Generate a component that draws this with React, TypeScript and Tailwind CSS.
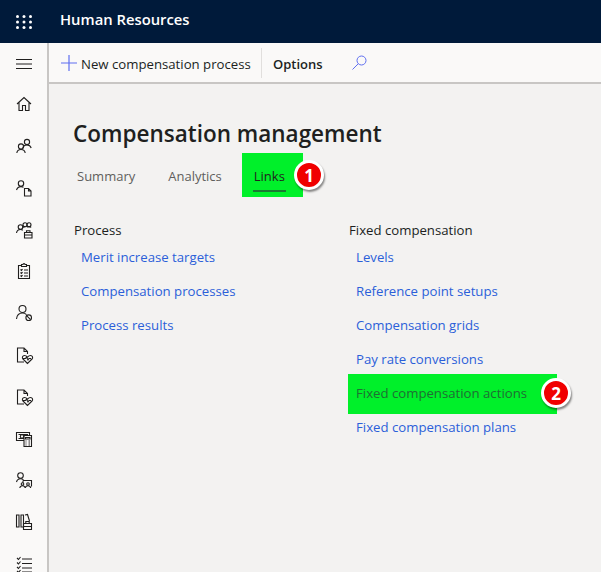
import type { ReactNode } from 'react'

const railIcons: ReactNode[] = [
  // home
  <path key="h" d="M1 8 8 1.5 15 8M3 6.5V14.5H6.5V9.5H9.5V14.5H13V6.5" />,
  // people
  <>
    <circle cx="11" cy="4" r="2.6" />
    <path d="M6.8 10c.4-2 2-3 4.2-3s3.600 1 4.200 3" />
    <circle cx="5" cy="8.500" r="2.600" />
    <path d="M.8 15c.3-2.300 2-3.500 4.200-3.500S8.900 12.700 9.200 15" />
  </>,
  // person + document
  <>
    <circle cx="5" cy="3.500" r="2.700" />
    <path d="M.5 10c.6-2 2.300-3.400 4.500-3.400 1 0 1.800.3 2.500.7" />
    <path d="M8.500 8.500h4l2.500 2.500v5h-6.500zM12.500 8.500V11H15" />
  </>,
  // people + briefcase
  <>
    <circle cx="4.500" cy="5" r="2.300" />
    <circle cx="9" cy="2.800" r="2" />
    <circle cx="13" cy="2.800" r="2" />
    <path d="M.5 11c.3-2 1.800-3.500 4-3.500 1 0 1.700.3 2.300.7M6.500 5.500c.7-.6 1.500-.9 2.500-.9M11 5c.6-.3 1.300-.4 2-.4.800 0 1.600.3 2.200.8" />
    <path d="M8.500 10.500h7.500v5.500H8.500zM10.500 10.500V8.800h3.500v1.700M8.500 13h7.500" />
  </>,
  // clipboard checklist
  <>
    <path d="M5 2.500H2.500v13h11v-13H11M5.500 3.500V1.500h1.500a1 1 0 0 1 2 0h1.500v2z" />
    <path d="M4.500 6.500l1 1 1-1.500M8 7h4M4.500 9.500l1 1 1-1.500M8 10h4M4.500 12.500l1 1 1-1.500M8 13h4" />
  </>,
  // person + blocked
  <>
    <circle cx="6.500" cy="4" r="3.500" />
    <path d="M.5 14c.4-3.500 2.800-6 6-6 1.600 0 3 .6 4 1.600" />
    <circle cx="12.700" cy="12.700" r="2.800" />
    <path d="M10.800 10.800l3.800 3.800" />
  </>,
  // doc + heart
  <>
    <path d="M8 15H1.500V1H8l3.500 3.500V7M8 1v3.500h3.500" />
    <path d="M11.500 16.500 7 12c-1.400-1.500-.3-3.500 1.400-3.500 1.300 0 2.300.7 3.100 1.700.8-1 1.800-1.700 3.100-1.700 1.700 0 2.800 2 1.400 3.500z" />
    <path d="M7 11.500h2.500l1-1.500 1.500 3 1-1.500h2" />
  </>,
  <>
    <path d="M8 15H1.500V1H8l3.500 3.500V7M8 1v3.500h3.500" />
    <path d="M11.500 16.500 7 12c-1.400-1.500-.3-3.500 1.400-3.500 1.300 0 2.300.7 3.100 1.700.8-1 1.800-1.700 3.100-1.700 1.700 0 2.800 2 1.400 3.500z" />
    <path d="M7 11.500h2.500l1-1.500 1.500 3 1-1.500h2" />
  </>,
  // money + calculator
  <>
    <path d="M8 10.500H.5v-8h13v3" />
    <path d="M2.500 4.500h9v1M2.500 8.500h5.500" />
    <circle cx="6" cy="6.500" r="1.700" />
    <path d="M8 5.500h7.500v11H8zM9.500 7.500h4.500v1.500H9.500zM9.500 11h1M12.500 11h1.500M9.500 13h1M12.500 13h1.500M9.500 15h1M12.500 15h1.500" />
  </>,
  // person + people in a box
  <>
    <circle cx="4.500" cy="3.500" r="2.800" />
    <path d="M.5 10c.5-2 2-3.300 4-3.300 1.300 0 2.400.6 3 1.300" />
    <path d="M7 8.500h8.500v6M7 8.500V11" />
    <circle cx="6.500" cy="12" r="1.300" />
    <circle cx="12" cy="12" r="1.300" />
    <path d="M3.800 16c.2-1.300 1.300-2.200 2.700-2.200S9 14.700 9.200 16M9.300 16c.2-1.300 1.300-2.200 2.700-2.200s2.500.9 2.700 2.200" />
  </>,
  // books + briefcase
  <>
    <path d="M.5 1h2.500v12H.5zM5 1h2.500v12H5zM9 1l2.500-.5 2 6.500" />
    <path d="M7.500 9.500h8v6h-8zM9.800 9.500V7.500h3.400v2M7.500 12.500h8" />
  </>,
  // checklist
  <path d="M6 3h10M6 7.500h10M6 12h10M6 16h10M1 2l1.500 1.500L4.500 1M1 6.500 2.500 8l2-2.500M1 11l1.500 1.500 2-2.500M1 15l1.500 1.500 2-2.500" />,
]

function RailIcon({ children }: { children: ReactNode }) {
  return (
    <div className="flex h-[41.75px] shrink-0 items-center justify-center">
      <svg width="16" height="17" viewBox="0 0 16 17" fill="none" stroke="#201f1e" strokeWidth="1.1" className="overflow-visible">
        {children}
      </svg>
    </div>
  )
}

function Badge({ n, className }: { n: number; className: string }) {
  return (
    <span className={`absolute flex h-[30px] w-[30px] items-center justify-center rounded-full border-[3px] border-white bg-[#f00000] text-[17px] font-bold leading-none text-white shadow-[1px_2px_2px_rgba(0,0,0,0.45)] ${className}`}>
      {n}
    </span>
  )
}

function LinkItem({ label }: { label: string }) {
  return (
    <a className="flex h-[34px] items-center pl-[7px] text-[#2b5fd9]">{label}</a>
  )
}

const processLinks = ['Merit increase targets', 'Compensation processes', 'Process results']

export default function App() {
  return (
    <div className="flex h-[572px] w-[601px] flex-col overflow-hidden bg-[#f3f2f1] font-['Open_Sans','Noto_Sans',sans-serif] text-[13.2px] text-[#201f1e]">
      {/* Top bar */}
      <header className="flex h-[43px] shrink-0 items-center bg-[#001a3a] text-white">
        <div className="flex w-[48px] justify-center">
          <svg width="16" height="14" viewBox="0 0 16 14" fill="white">
            {[1.5, 7, 12.5].map((y) =>
              [1.5, 8, 14.5].map((x) => <circle key={`${x}-${y}`} cx={x} cy={y} r="1.5" />),
            )}
          </svg>
        </div>
        <span className="mb-[5px] ml-[12px] text-[14.8px] font-semibold">Human Resources</span>
      </header>

      <div className="flex min-h-0 flex-1">
        {/* Nav rail */}
        <nav className="flex w-[49px] shrink-0 flex-col border-r-2 border-[#c8c6c4] bg-[#faf9f8]">
          <div className="flex h-[41px] shrink-0 items-center justify-center pt-px">
            <svg width="16" height="10" viewBox="0 0 16 10" stroke="#201f1e" strokeWidth="1">
              <path d="M0 .5h16M0 5h16M0 9.500h16" />
            </svg>
          </div>
          {railIcons.map((icon, i) => (
            <RailIcon key={i}>{icon}</RailIcon>
          ))}
        </nav>

        <div className="flex min-w-0 flex-1 flex-col">
          {/* Command bar */}
          <div className="flex h-[41px] shrink-0 items-center border-b-2 border-[#c8c6c4] bg-[#faf9f8]">
            <svg width="16" height="16" viewBox="0 0 16 16" stroke="#5f6ff0" strokeWidth="1.2" className="ml-[12px]">
              <path d="M8 0v16M0 8h16" />
            </svg>
            <span className="ml-[4px] mt-[5px] w-[180px]">New compensation process</span>
            <div className="h-[30px] w-px bg-[#e1dfdd]" />
            <span className="ml-[11px] mt-[5px] text-[13px] font-semibold">Options</span>
            <svg width="15" height="15" viewBox="0 0 15 15" fill="none" stroke="#5f6ff0" strokeWidth="1" className="ml-[29px]">
              <circle cx="9.500" cy="5.500" r="4.500" />
              <path d="M6.300 8.700.5 14.500" />
            </svg>
          </div>

          {/* Page content */}
          <main className="flex-1 pl-[25px] pt-[34px]">
            <h1 className="-ml-px text-[22.5px] font-semibold leading-[32px]">Compensation management</h1>

            <div className="relative mt-[3px] flex h-[44px] items-center text-[13px] text-[#605e5c]">
              <span className="ml-[3px] pt-[4px]">Summary</span>
              <span className="ml-[33px] pt-[4px]">Analytics</span>
              <div className="relative ml-[20px] flex h-[44px] w-[61px] items-center bg-[#00f02a] pl-[12px] pt-[4px] text-[#201f1e]">
                Links
                <span className="absolute bottom-[5px] left-[11px] h-[2px] w-[33px] bg-[#1a7a32]" />
              </div>
              <Badge n={1} className="left-[220px] top-[7px]" />
            </div>

            <div className="mt-[14px] flex">
              <section className="w-[275px]">
                <h2 className="flex h-[40px] items-center font-normal leading-none">Process</h2>
                <div className="-mt-[10px]">
                  {processLinks.map((l) => (
                    <LinkItem key={l} label={l} />
                  ))}
                </div>
              </section>
              <section className="flex-1">
                <h2 className="flex h-[40px] items-center font-normal leading-none">Fixed compensation</h2>
                <div className="-mt-[10px]">
                  {['Levels', 'Reference point setups', 'Compensation grids', 'Pay rate conversions'].map((l) => (
                    <LinkItem key={l} label={l} />
                  ))}
                  <div className="relative -ml-px -my-[3px] flex h-[40px] w-[209px] items-center bg-[#00f02a] pl-[8px] text-[#1f6e34]">
                    Fixed compensation actions
                    <Badge n={2} className="left-[193px] top-[4px]" />
                  </div>
                  <LinkItem label="Fixed compensation plans" />
                </div>
              </section>
            </div>
          </main>
        </div>
      </div>
    </div>
  )
}
